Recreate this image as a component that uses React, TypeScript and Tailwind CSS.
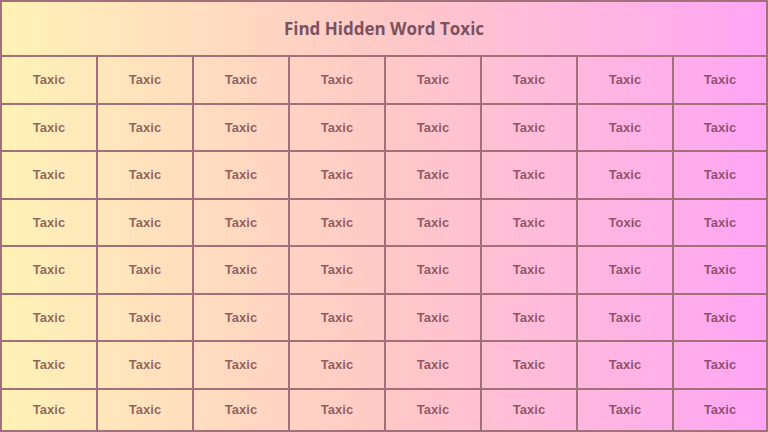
const ROWS = 8;
const COLS = 8;

// the odd one out sits in row 4, column 7
const word = (r: number, c: number) => (r === 3 && c === 6 ? "Toxic" : "Taxic");

export default function App() {
  return (
    <div className="w-[768px] h-[432px] flex flex-col border-2 border-[#a2707a] bg-gradient-to-r from-[#fff2b6] via-[#ffc9c6] to-[#ffa5f5] font-['Liberation_Sans',Arial,sans-serif]">
      <div className="h-[55px] shrink-0 flex items-center justify-center border-b-2 border-[#a2707a]">
        <h1 className="text-[17px] font-bold text-[#7b5260] font-['Open_Sans',sans-serif]">
          Find Hidden Word Toxic
        </h1>
      </div>
      <div className="flex-1 grid grid-cols-[repeat(7,96px)_1fr] grid-rows-[repeat(7,47.5px)_1fr]">
        {Array.from({ length: ROWS }).map((_, r) =>
          Array.from({ length: COLS }).map((_, c) => (
            <div
              key={`${r}-${c}`}
              className={`flex items-center justify-center text-[13px] font-bold text-[rgba(85,28,42,0.66)] border-[#a2707a] ${
                c < COLS - 1 ? "border-r-2" : ""
              } ${r < ROWS - 1 ? "border-b-2" : ""}`}
            >
              {word(r, c)}
            </div>
          ))
        )}
      </div>
    </div>
  );
}
